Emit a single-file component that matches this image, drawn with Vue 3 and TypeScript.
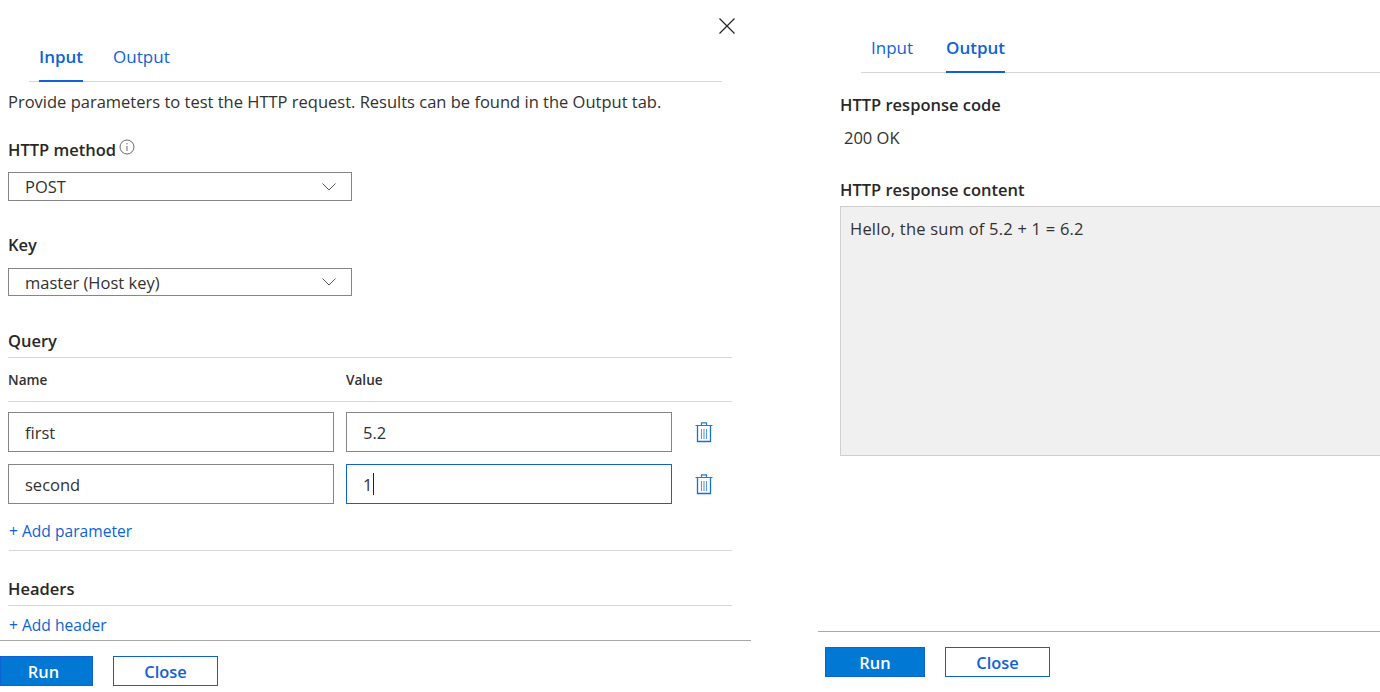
<script setup lang="ts">
import { ref } from 'vue'

const params = ref([
  { name: 'first', value: '5.2', focused: false },
  { name: 'second', value: '1', focused: true }
])
</script>

<template>
  <div class="page">
    <!-- input side -->
    <section class="panel left">
      <div class="close-row">
        <svg class="close-x" width="16" height="16" viewBox="0 0 16 16" fill="none" stroke="#252423" stroke-width="1.2">
          <path d="M0.5 0.5 L15.5 15.5 M15.5 0.5 L0.5 15.5" />
        </svg>
      </div>
      <div class="tabs left-tabs">
        <span class="tab active">Input</span>
        <span class="tab">Output</span>
      </div>
      <p class="desc">Provide parameters to test the HTTP request. Results can be found in the Output tab.</p>

      <div class="label method-label">
        HTTP method
        <svg class="info" width="16" height="16" viewBox="0 0 16 16" fill="none" stroke="#444">
          <circle cx="8" cy="8" r="7" stroke-width="0.8" />
          <path d="M8 7 V12 M8 4 V5.4" stroke-width="0.8" />
        </svg>
      </div>
      <div class="select">
        <span>POST</span>
        <svg width="14" height="8" viewBox="0 0 14 8" fill="none" stroke="#555"><path d="M0.5 0.5 L7 7 L13.5 0.5" /></svg>
      </div>

      <div class="label key-label">Key</div>
      <div class="select">
        <span>master (Host key)</span>
        <svg width="14" height="8" viewBox="0 0 14 8" fill="none" stroke="#555"><path d="M0.5 0.5 L7 7 L13.5 0.5" /></svg>
      </div>

      <div class="label section-title query-title">Query</div>
      <div class="col-head">
        <span>Name</span>
        <span>Value</span>
      </div>
      <div class="rows">
        <div v-for="p in params" :key="p.name" class="param-row">
          <div class="field">{{ p.name }}</div>
          <div class="field" :class="{ focused: p.focused }">
            {{ p.value }}<i v-if="p.focused" class="caret"></i>
          </div>
          <svg class="trash" width="18" height="21" viewBox="0 0 18 21" fill="none" stroke="#2b7cd3">
            <path d="M0.5 3.5 H17.5 M6.5 3 V0.8 H11.5 V3" stroke-width="1.2" />
            <path d="M2.5 4 V19.5 H15.5 V4" stroke-width="1.3" stroke="#1a6fd0" />
            <path d="M6.5 7 V17 M9 7 V17 M11.5 7 V17" stroke-width="1.1" stroke="#5b9be0" />
          </svg>
        </div>
      </div>
      <a class="add add-param">+ Add parameter</a>
      <div class="label section-title headers-title">Headers</div>
      <a class="add add-header">+ Add header</a>

      <div class="footer">
        <button class="btn primary left-run">Run</button>
        <button class="btn">Close</button>
      </div>
    </section>

    <!-- output side -->
    <section class="panel right">
      <div class="tabs right-tabs">
        <span class="tab">Input</span>
        <span class="tab active">Output</span>
      </div>
      <div class="out-body">
        <div class="label code-label">HTTP response code</div>
        <div class="code">200 OK</div>
        <div class="label content-label">HTTP response content</div>
        <div class="content-box">Hello, the sum of 5.2 + 1 = 6.2</div>
      </div>
      <div class="footer right-footer">
        <button class="btn primary right-run">Run</button>
        <button class="btn">Close</button>
      </div>
    </section>
  </div>
</template>

<style>
body {
  background: #fff;
}
</style>

<style scoped>
.page {
  display: flex;
  width: 1380px;
  height: 692px;
  overflow: hidden;
  font-family: 'Open Sans', 'Noto Sans', sans-serif;
  font-size: 16.5px;
  color: #323130;
}

.panel {
  display: flex;
  flex-direction: column;
  height: 692px;
}

.left {
  width: 751px;
  flex: none;
}

.right {
  width: 562px;
  margin-left: 67px;
  flex: none;
}

.close-row {
  height: 39px;
  padding: 18px 0 0 719px;
  box-sizing: border-box;
}

.close-x {
  display: block;
}

.tabs {
  display: flex;
  gap: 30px;
  height: 43px;
  box-sizing: border-box;
  border-bottom: 1px solid #d6d6d6;
  padding-left: 10px;
}

.left-tabs {
  margin-left: 29px;
  width: 693px;
}

.right-tabs {
  margin: 30px 0 0 43px;
  width: 519px;
  gap: 33px;
}

.tab {
  color: #0f62d6;
  font-size: 17px;
  line-height: 35px;
  height: 43px;
  box-sizing: border-box;
}

.tab.active {
  font-weight: 600;
  border-bottom: 2px solid #0f62d6;
}

.desc {
  margin: 9px 0 0 8px;
  line-height: 22px;
  white-space: nowrap;
}

.label {
  font-weight: 600;
  color: #292827;
  line-height: 24px;
  margin-left: 8px;
  font-size: 16.5px;
}

.section-title {
  width: 724px;
  height: 29px;
  box-sizing: border-box;
  border-bottom: 1px solid #d6d6d6;
}

.method-label {
  margin-top: 25px;
  display: flex;
  align-items: flex-start;
}

.info {
  margin: 1px 0 0 3px;
  flex: none;
}

.select {
  display: flex;
  justify-content: space-between;
  align-items: center;
  width: 344px;
  height: 29px;
  margin: 10px 0 0 8px;
  padding: 0 15px 0 16px;
  box-sizing: border-box;
  border: 1px solid #858585;
}

.key-label {
  margin-top: 32px;
}

.key-label + .select {
  margin-top: 11px;
  height: 28px;
}

.query-title {
  margin-top: 33px;
}

.col-head {
  display: grid;
  grid-template-columns: 338px 1fr;
  width: 724px;
  height: 44px;
  margin-left: 8px;
  box-sizing: border-box;
  border-bottom: 1px solid #d6d6d6;
  font-size: 13.6px;
  font-weight: 600;
  line-height: 44px;
}

.rows {
  display: flex;
  flex-direction: column;
  gap: 12px;
  margin: 10px 0 0 8px;
}

.param-row {
  display: grid;
  grid-template-columns: 326px 326px 18px;
  column-gap: 12px;
  align-items: center;
}

.field {
  display: flex;
  align-items: center;
  height: 40px;
  padding-left: 16px;
  box-sizing: border-box;
  border: 1px solid #858585;
}

.field.focused {
  border-color: #0f62d6;
}

.caret {
  display: inline-block;
  width: 1px;
  height: 22px;
  margin-left: 1px;
  background: #222;
}

.trash {
  margin-left: 11px;
}

.add {
  color: #0f62d6;
  margin-left: 9px;
  line-height: 20px;
  white-space: nowrap;
  font-size: 15.6px;
}

.add-param {
  width: 723px;
  height: 30px;
  margin-top: 17px;
  box-sizing: border-box;
  border-bottom: 1px solid #d6d6d6;
}

.headers-title {
  margin-top: 26px;
}

.add-header {
  margin-top: 9px;
  height: 25px;
}

.footer {
  display: flex;
  gap: 20px;
  padding-top: 15px;
  border-top: 1px solid #a8a8a8;
  margin-top: 0;
}

.right-footer {
  margin-top: auto;
  margin-bottom: 15px;
  padding-left: 7px;
}

.btn {
  width: 105px;
  height: 30px;
  padding: 0;
  border: 1px solid #0f62d6;
  background: #fff;
  color: #0f62d6;
  font: 600 16.4px 'Open Sans', 'Noto Sans', sans-serif;
}

.btn.primary {
  background: #0078d4;
  color: #fff;
}

.left-run {
  width: 93px;
  padding-right: 6px;
}

.right-run {
  width: 100px;
}

.out-body {
  margin-left: 22px;
}

.out-body .label {
  margin-left: 0;
}

.code-label {
  margin-top: 20px;
}

.code {
  margin: 10px 0 0 4px;
  line-height: 22px;
}

.content-label {
  margin-top: 29px;
}

.content-box {
  width: 540px;
  height: 250px;
  margin-top: 4px;
  padding: 11px 9px;
  box-sizing: border-box;
  background: #f0f0f0;
  border: 1px solid #cfcfcf;
  border-right: none;
  line-height: 22px;
  letter-spacing: 0.22px;
}
</style>
